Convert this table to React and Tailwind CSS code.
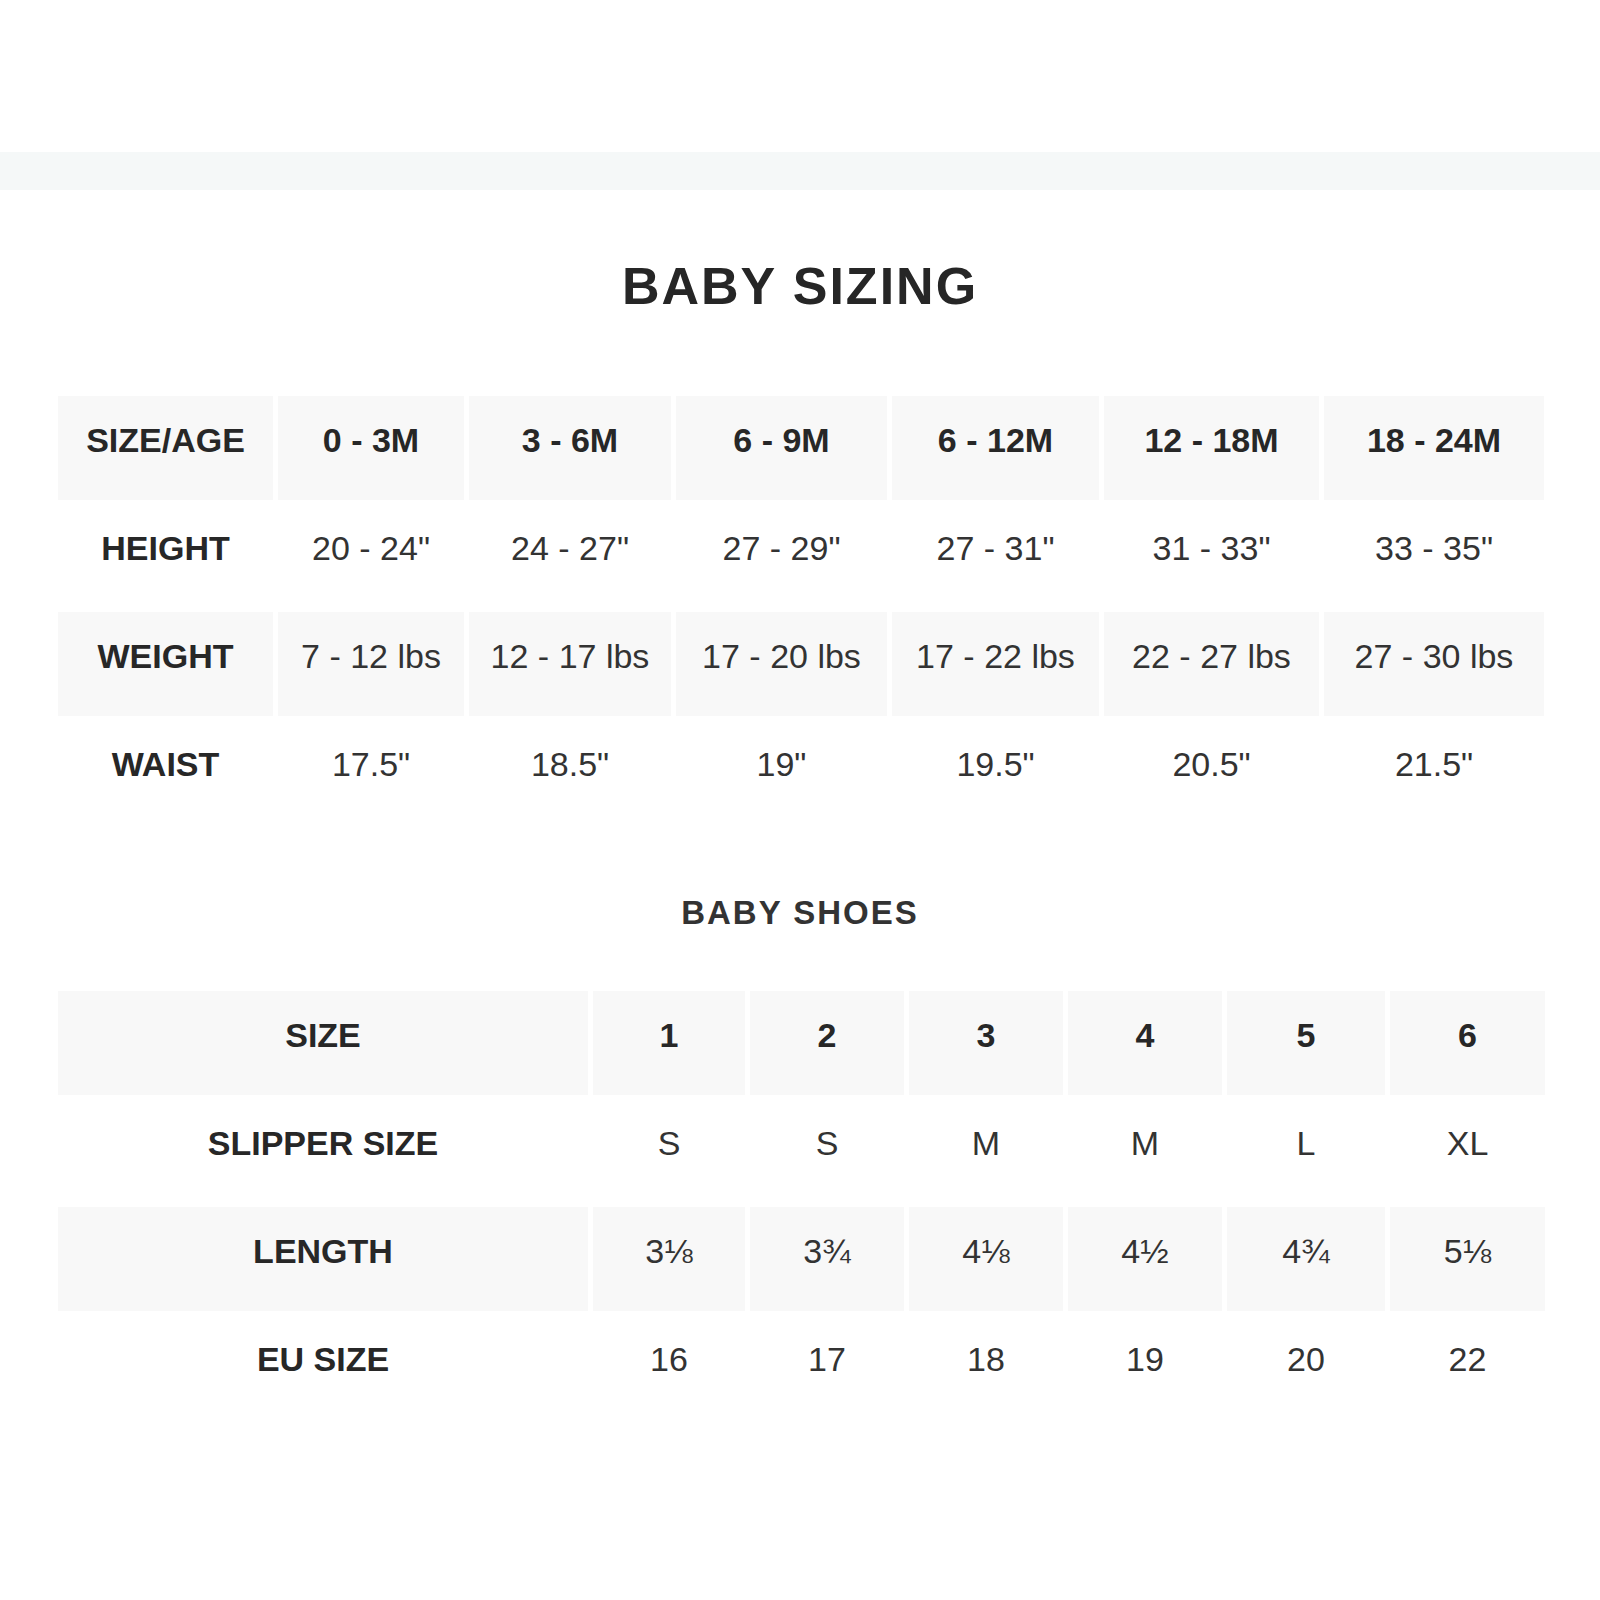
const sizing = [
  ["SIZE/AGE", "0 - 3M", "3 - 6M", "6 - 9M", "6 - 12M", "12 - 18M", "18 - 24M"],
  ["HEIGHT", "20 - 24\"", "24 - 27\"", "27 - 29\"", "27 - 31\"", "31 - 33\"", "33 - 35\""],
  ["WEIGHT", "7 - 12 lbs", "12 - 17 lbs", "17 - 20 lbs", "17 - 22 lbs", "22 - 27 lbs", "27 - 30 lbs"],
  ["WAIST", "17.5\"", "18.5\"", "19\"", "19.5\"", "20.5\"", "21.5\""],
];

const shoes = [
  ["SIZE", "1", "2", "3", "4", "5", "6"],
  ["SLIPPER SIZE", "S", "S", "M", "M", "L", "XL"],
  ["LENGTH", "3⅛", "3¾", "4⅛", "4½", "4¾", "5⅛"],
  ["EU SIZE", "16", "17", "18", "19", "20", "22"],
];

const SizeTable = ({ rows, cols }) => {
  return (
    <div className={`grid ${cols} gap-x-[5px] gap-y-[4px]`}>
      {rows.map((row, r) =>
        row.map((cell, c) => {
          const bold = r === 0 || c === 0;
          const shaded = r % 2 === 0;
          return (
            <div
              key={`${r}-${c}`}
              className={`h-[104px] flex items-center justify-center pb-[16px] text-[34px] leading-none ${
                shaded ? "bg-[#f8f8f8]" : "bg-white"
              } ${bold ? "font-bold text-[#272727]" : "font-normal text-[#333333]"}`}
            >
              {cell}
            </div>
          );
        })
      )}
    </div>
  );
};

export default function App() {
  return (
    <div className="w-[1600px] h-[1600px] bg-white font-['Liberation_Sans',Arial,sans-serif]">
      <div className="h-[152px]" />
      <div className="h-[38px] bg-[#f5f8f8]" />

      <div className="h-[206px] flex items-center justify-center pb-[14px]">
        <h1 className="text-[52px] leading-none font-bold tracking-[2px] text-[#262626]">BABY SIZING</h1>
      </div>

      <div className="px-[58px]">
        <SizeTable
          rows={sizing}
          cols="grid-cols-[215px_186px_202px_211px_207px_215px_220px]"
        />
      </div>

      <div className="h-[167px] flex items-center justify-center pt-[9px]">
        <h2 className="text-[33px] leading-none font-bold tracking-[2px] text-[#333333]">BABY SHOES</h2>
      </div>

      <div className="px-[58px]">
        <SizeTable
          rows={shoes}
          cols="grid-cols-[530px_152px_154px_154px_154px_158px_155px]"
        />
      </div>
    </div>
  );
}
